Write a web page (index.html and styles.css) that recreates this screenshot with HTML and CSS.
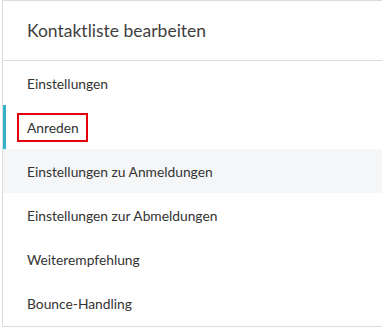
FILE: index.html
```html
<!DOCTYPE html>
<html lang="de">
<head>
<meta charset="utf-8">
<title>Kontaktliste bearbeiten</title>
<link rel="stylesheet" href="styles.css">
</head>
<body>
<div class="card">
  <div class="card-header">Kontaktliste bearbeiten</div>
  <ul class="menu">
    <li class="item">Einstellungen</li>
    <li class="item active"><span class="mark">Anreden</span></li>
    <li class="item hover">Einstellungen zu Anmeldungen</li>
    <li class="item">Einstellungen zur Abmeldungen</li>
    <li class="item">Weiterempfehlung</li>
    <li class="item">Bounce-Handling</li>
  </ul>
</div>
</body>
</html>
```
FILE: styles.css
```css
html, body {
  margin: 0;
  padding: 0;
  background: #ffffff;
}
body {
  font-family: Lato, "Open Sans", sans-serif;
  color: #333333;
}
.card {
  margin-left: 2px;
  border: 1px solid #dcdcdc;
  border-right: 0;
  background: #ffffff;
  padding-bottom: 1px;
}
.card-header {
  height: 59px;
  display: flex;
  align-items: center;
  padding-left: 24px;
  font-size: 17.5px;
  color: #3f3f3f;
  border-bottom: 1px solid #dcdcdc;
}
.menu {
  list-style: none;
  margin: 0;
  padding: 0;
}
.item {
  height: 44px;
  display: flex;
  align-items: center;
  padding-left: 24px;
  font-size: 13.8px;
  color: #333333;
}
.item.active {
  box-shadow: inset 3px 0 0 #33b3c9;
  padding-left: 14px;
}
.item.hover {
  background: #f5f6f7;
}
.mark {
  display: inline-block;
  border: 2px solid #e5000b;
  padding: 4px 7px 4px 8px;
  line-height: 17px;
}
```
